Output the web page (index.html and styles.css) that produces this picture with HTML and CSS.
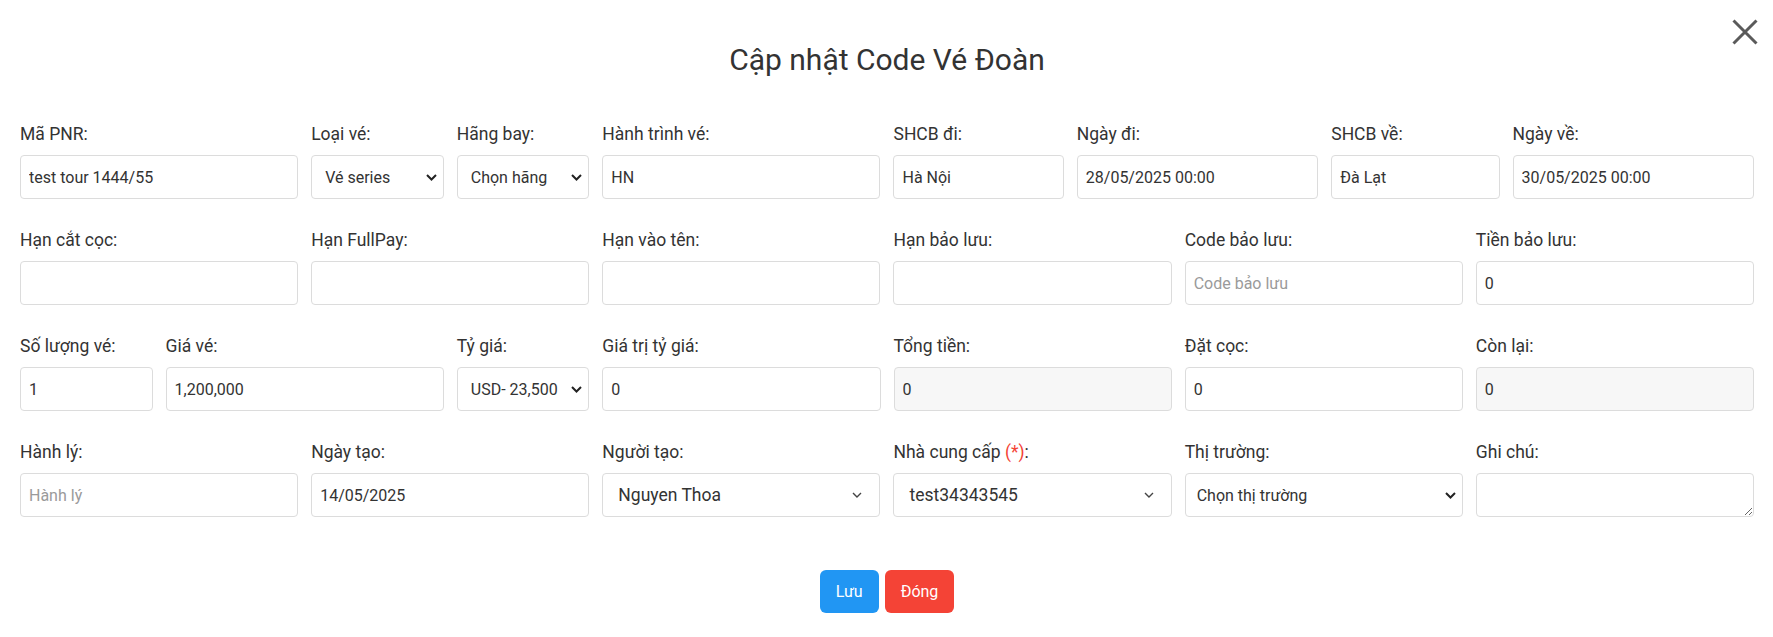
FILE: index.html
```html
<!DOCTYPE html>
<html lang="vi">
<head>
<meta charset="utf-8">
<title>Cập nhật Code Vé Đoàn</title>
<link rel="stylesheet" href="styles.css">
</head>
<body>
<div class="modal">
  <button class="close" type="button" aria-label="Close">
    <svg width="26" height="26" viewBox="0 0 26 26"><path d="M1.5 1.5 L24.5 24.5 M24.5 1.5 L1.5 24.5" stroke="#5a5a5a" stroke-width="3" fill="none"/></svg>
  </button>
  <h1 class="title">Cập nhật Code Vé Đoàn</h1>

  <form class="form">
    <div class="row">
      <div class="group span2"><label>Mã PNR:</label><input class="ctl" type="text" value="test tour 1444/55"></div>
      <div class="group span1"><label>Loại vé:</label>
        <div class="sel"><select class="ctl sel-ctl"><option>Vé series</option></select>
          <svg class="chev" width="11" height="7" viewBox="0 0 11 7"><path d="M1 1 L5.5 5.5 L10 1" stroke="#222" stroke-width="2" fill="none"/></svg></div></div>
      <div class="group span1"><label>Hãng bay:</label>
        <div class="sel"><select class="ctl sel-ctl"><option>Chọn hãng</option></select>
          <svg class="chev" width="11" height="7" viewBox="0 0 11 7"><path d="M1 1 L5.5 5.5 L10 1" stroke="#222" stroke-width="2" fill="none"/></svg></div></div>
      <div class="group span2"><label>Hành trình vé:</label><input class="ctl" type="text" value="HN"></div>
      <div class="sub span6">
        <div class="group"><label>SHCB đi:</label><input class="ctl" type="text" value="Hà Nội"></div>
        <div class="group"><label>Ngày đi:</label><input class="ctl" type="text" value="28/05/2025 00:00"></div>
        <div class="group"><label>SHCB về:</label><input class="ctl" type="text" value="Đà Lạt"></div>
        <div class="group"><label>Ngày về:</label><input class="ctl" type="text" value="30/05/2025 00:00"></div>
      </div>
    </div>

    <div class="row">
      <div class="group span2"><label>Hạn cắt cọc:</label><input class="ctl" type="text"></div>
      <div class="group span2"><label>Hạn FullPay:</label><input class="ctl" type="text"></div>
      <div class="group span2"><label>Hạn vào tên:</label><input class="ctl" type="text"></div>
      <div class="group span2"><label>Hạn bảo lưu:</label><input class="ctl" type="text"></div>
      <div class="group span2"><label>Code bảo lưu:</label><input class="ctl" type="text" placeholder="Code bảo lưu"></div>
      <div class="group span2"><label>Tiền bảo lưu:</label><input class="ctl" type="text" value="0"></div>
    </div>

    <div class="row">
      <div class="group span1"><label>Số lượng vé:</label><input class="ctl" type="text" value="1"></div>
      <div class="group span2"><label>Giá vé:</label><input class="ctl" type="text" value="1,200,000"></div>
      <div class="group span1"><label>Tỷ giá:</label>
        <div class="sel"><select class="ctl sel-ctl"><option>USD- 23,500</option></select>
          <svg class="chev" width="11" height="7" viewBox="0 0 11 7"><path d="M1 1 L5.5 5.5 L10 1" stroke="#222" stroke-width="2" fill="none"/></svg></div></div>
      <div class="group span2"><label>Giá trị tỷ giá:</label><input class="ctl" type="text" value="0"></div>
      <div class="group span2"><label>Tổng tiền:</label><input class="ctl ro" type="text" value="0" readonly></div>
      <div class="group span2"><label>Đặt cọc:</label><input class="ctl" type="text" value="0"></div>
      <div class="group span2"><label>Còn lại:</label><input class="ctl ro" type="text" value="0" readonly></div>
    </div>

    <div class="row">
      <div class="group span2"><label>Hành lý:</label><input class="ctl" type="text" placeholder="Hành lý"></div>
      <div class="group span2"><label>Ngày tạo:</label><input class="ctl" type="text" value="14/05/2025"></div>
      <div class="group span2"><label>Người tạo:</label>
        <div class="s2 ctl"><span class="s2-text">Nguyen Thoa</span>
          <svg width="10" height="6" viewBox="0 0 10 6"><path d="M1 1 L5 5 L9 1" stroke="#444" stroke-width="1.4" fill="none"/></svg></div></div>
      <div class="group span2"><label>Nhà cung cấp <span class="req">(*)</span>:</label>
        <div class="s2 ctl"><span class="s2-text">test34343545</span>
          <svg width="10" height="6" viewBox="0 0 10 6"><path d="M1 1 L5 5 L9 1" stroke="#444" stroke-width="1.4" fill="none"/></svg></div></div>
      <div class="group span2"><label>Thị trường:</label>
        <div class="sel"><select class="ctl sel-ctl wide"><option>Chọn thị trường</option></select>
          <svg class="chev" width="11" height="7" viewBox="0 0 11 7"><path d="M1 1 L5.5 5.5 L10 1" stroke="#222" stroke-width="2" fill="none"/></svg></div></div>
      <div class="group span2"><label>Ghi chú:</label><textarea class="ctl area"></textarea></div>
    </div>

    <div class="actions">
      <button type="button" class="btn btn-save">Lưu</button>
      <button type="button" class="btn btn-close">Đóng</button>
    </div>
  </form>
</div>
</body>
</html>
```

FILE: styles.css
```css
* { box-sizing: border-box; }

html, body {
  margin: 0;
  padding: 0;
  background: #fff;
}

body {
  font-family: Roboto, "Liberation Sans", Arial, sans-serif;
  font-size: 16px;
  color: #333;
}

.modal {
  position: relative;
  padding: 40px 19px 0 20px;
}

.close {
  position: absolute;
  top: 19px;
  right: 15px;
  width: 26px;
  height: 26px;
  padding: 0;
  border: 0;
  background: none;
  cursor: pointer;
  line-height: 0;
}

.title {
  margin: 0 0 42px;
  font-size: 30px;
  line-height: 40px;
  font-weight: 400;
  text-align: center;
  color: #333;
}

.row {
  display: grid;
  grid-template-columns: repeat(12, 1fr);
  column-gap: 13px;
}

.span1 { grid-column: span 1; }
.span2 { grid-column: span 2; }
.span6 { grid-column: span 6; }

.sub {
  display: grid;
  grid-template-columns: 170fr 241fr 168fr 241fr;
  column-gap: 13px;
}

.group {
  display: flex;
  flex-direction: column;
  margin-bottom: 29px;
  min-width: 0;
}

.group label {
  display: block;
  font-size: 17.5px;
  line-height: 24px;
  margin-bottom: 9px;
  color: #333;
  white-space: nowrap;
}

.req { color: #f44336; }

.ctl {
  display: block;
  width: 100%;
  height: 44px;
  margin: 0;
  padding: 0 8px;
  border: 1px solid #dcdcdc;
  border-radius: 4px;
  background: #fff;
  font-family: inherit;
  font-size: 16px;
  color: #333;
  outline: none;
}

.ctl::placeholder { color: #9a9a9a; }

.ro { background: #f7f7f7; }

.sel { position: relative; }

.sel-ctl {
  -webkit-appearance: none;
  appearance: none;
  padding: 0 24px 0 13px;
}

.sel-ctl.wide { padding-left: 11px; }

.chev {
  position: absolute;
  right: 7px;
  top: 19px;
  pointer-events: none;
}

.s2 {
  display: flex;
  align-items: center;
  justify-content: space-between;
  padding: 0 17px 0 15px;
}

.s2-text {
  font-size: 17.5px;
  color: #333;
}

.area {
  resize: vertical;
  padding: 6px 8px;
}

.actions {
  display: flex;
  justify-content: center;
  gap: 6px;
  margin-top: 24px;
}

.btn {
  height: 43px;
  padding: 0 16px;
  border: 0;
  border-radius: 6px;
  font-family: inherit;
  font-size: 16px;
  color: #fff;
  cursor: pointer;
}

.btn-save { background: #2196f3; }
.btn-close { background: #f44336; }
```
